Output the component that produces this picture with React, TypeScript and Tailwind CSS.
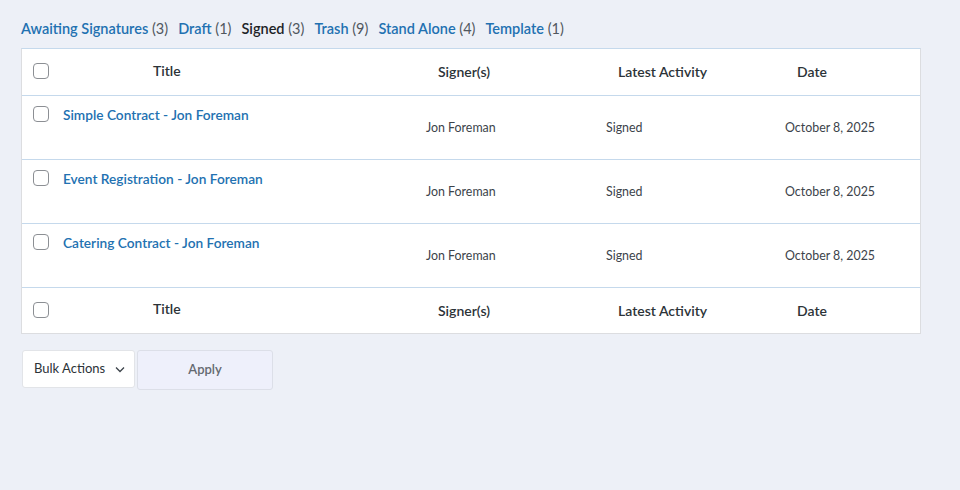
import React from 'react';

const tabs = [
  { label: 'Awaiting Signatures', count: 3 },
  { label: 'Draft', count: 1 },
  { label: 'Signed', count: 3, current: true },
  { label: 'Trash', count: 9 },
  { label: 'Stand Alone', count: 4 },
  { label: 'Template', count: 1 },
];

const docs = [
  { title: 'Simple Contract - Jon Foreman', signer: 'Jon Foreman', activity: 'Signed', date: 'October 8, 2025' },
  { title: 'Event Registration - Jon Foreman', signer: 'Jon Foreman', activity: 'Signed', date: 'October 8, 2025' },
  { title: 'Catering Contract - Jon Foreman', signer: 'Jon Foreman', activity: 'Signed', date: 'October 8, 2025' },
];

const cols = 'grid grid-cols-[42px_353px_180px_179px_1fr]';

const Checkbox = () => (
  <span className="block w-4 h-4 rounded-[4px] border border-[#8c8f94] bg-white" />
);

const HeaderRow = ({ top }: { top?: boolean }) => (
  <div className={`${cols} items-center text-[14px] font-semibold text-[#2c3338] ${top ? 'h-[47px] border-b border-[#c5d9ec]' : 'h-[45px]'}`}>
    <div className="pl-[11px] -mt-[2px]"><Checkbox /></div>
    <div className="pl-[89px] -mt-[4px]">Title</div>
    <div className="pl-[21px] -mt-px">Signer(s)</div>
    <div className="pl-[21px] -mt-px">Latest Activity</div>
    <div className="pl-[21px] -mt-px">Date</div>
  </div>
);

const App: React.FC = () => {
  return (
    <div className="min-h-[490px] w-[960px] bg-[#edf0f7] px-[21px] pt-[19px]" style={{ fontFamily: 'Lato, "Liberation Sans", sans-serif' }}>
      <div className="flex items-center gap-[10px] text-[14.5px] leading-5">
        {tabs.map((t) => (
          <span key={t.label}>
            <span className={t.current ? 'font-semibold text-[#1d2327]' : 'font-semibold text-[#2271b1]'}>{t.label}</span>
            <span className="text-[#50575e]"> ({t.count})</span>
          </span>
        ))}
      </div>

      <div className="mt-[9px] w-[900px] bg-white border border-[#dcdde0] border-t-[#c5d9ec]">
        <HeaderRow top />
        {docs.map((d) => (
          <div key={d.title} className={`${cols} h-[64px] border-b border-[#c5d9ec] text-[12.4px] text-[#3c434a]`}>
            <div className="pl-[11px] pt-[10px]"><Checkbox /></div>
            <div className="pt-[9px]">
              <a className="text-[13.7px] font-semibold text-[#2271b1] leading-5 -ml-[1px]">{d.title}</a>
            </div>
            <div className="pl-[9px] pt-[2px] flex items-center">{d.signer}</div>
            <div className="pl-[9px] pt-[2px] flex items-center">{d.activity}</div>
            <div className="pl-[9px] pt-[2px] flex items-center">{d.date}</div>
          </div>
        ))}
        <HeaderRow />
      </div>

      <div className="mt-[16px] ml-px flex items-start gap-[2px]">
        <div className="flex h-[38px] w-[113px] items-center justify-between rounded-[3px] border border-[#e2e4e8] bg-white pl-[11px] pr-[8px] text-[13px] text-[#2c3338]">
          <span>Bulk Actions</span>
          <svg width="12" height="12" viewBox="0 0 12 12" fill="none" stroke="#3c434a" strokeWidth="1.3">
            <path d="M2 4.5 L6 8.5 L10 4.5" />
          </svg>
        </div>
        <button className="h-[40px] w-[136px] rounded-[3px] border border-[#dcdfe8] bg-[#eef0fb] text-[13px] font-semibold text-[#646970]">
          Apply
        </button>
      </div>
    </div>
  );
};

export default App;
